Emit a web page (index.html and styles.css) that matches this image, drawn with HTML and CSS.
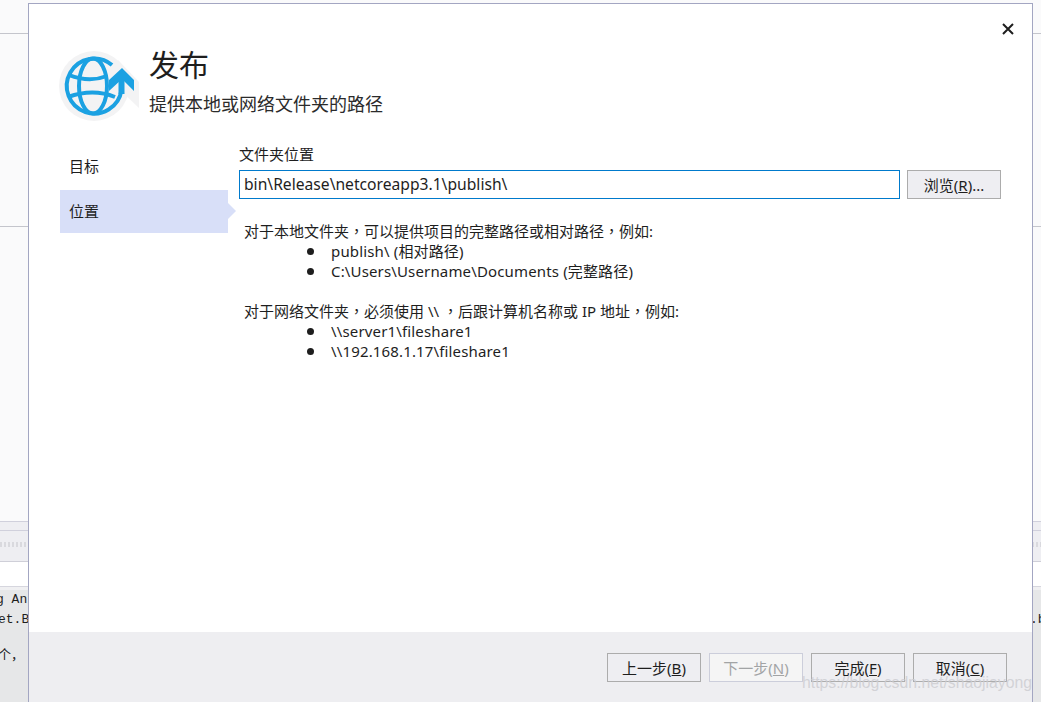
FILE: index.html
```html
<!DOCTYPE html>
<html lang="zh-CN">
<head>
<meta charset="utf-8">
<title>发布</title>
<link rel="stylesheet" href="styles.css">
</head>
<body>
<div class="ide">
  <div class="ide-top"><div class="ide-row-a"></div><div class="ide-row-b"></div><div class="ide-row-c"></div></div>
  <div class="ide-tabs"><div class="ide-grip"></div></div>
  <div class="ide-blank"></div>
  <div class="ide-console">
    <div class="con-line con-a"><span>g Ant</span></div>
    <div class="con-line con-b"><span>et.B</span><span class="con-right">.b</span></div>
    <div class="con-line con-c"><span>个，</span></div>
  </div>
</div>
<section class="dialog">
  <button class="close" aria-label="关闭">
    <svg width="12" height="12" viewBox="0 0 12 12"><path d="M1 1l10 10M11 1L1 11" stroke="#1e1e1e" stroke-width="2" fill="none"/></svg>
  </button>
  <header class="head">
    <svg class="logo" width="82" height="74" viewBox="59 49 82 74">
      <circle cx="94" cy="86" r="35" fill="#f3f3f4"/>
      <path d="M118 60l21 22v26l-24-23z" fill="#f3f3f4"/>
      <g fill="none" stroke="#1ba1e2" stroke-width="4">
        <path d="M112 65A27.500 27.500 0 1 0 121.500 90"/>
        <ellipse cx="93" cy="86" rx="14" ry="27.500"/>
        <path d="M69 75q20 8 38 1M68 97q25-9 47 0"/>
      </g>
      <path d="M121.500 76V94" fill="none" stroke="#1ba1e2" stroke-width="6"/>
      <path d="M122 68l12 12v11l-12-12-13 12V80z" fill="#1ba1e2"/>
    </svg>
    <div class="titles">
      <h1>发布</h1>
      <p>提供本地或网络文件夹的路径</p>
    </div>
  </header>
  <div class="body">
    <nav class="steps">
      <div class="step">目标</div>
      <div class="step active">位置</div>
    </nav>
    <main class="content">
      <label class="field-label">文件夹位置</label>
      <div class="field-row">
        <div class="input">bin\Release\netcoreapp3.1\publish\</div>
        <button class="btn btn-browse">浏览(<u>R</u>)...</button>
      </div>
      <div class="help">
        <p>对于本地文件夹<span class="cm" lang="zh-TW">，</span>可以提供项目的完整路径或相对路径<span class="cm" lang="zh-TW">，</span>例如:</p>
        <ul>
          <li>publish\ (相对路径)</li>
          <li>C:\Users\Username\Documents (完整路径)</li>
        </ul>
        <p class="gap">对于网络文件夹<span class="cm" lang="zh-TW">，</span>必须使用 \\ <span class="cm" lang="zh-TW">，</span>后跟计算机名称或 IP 地址<span class="cm" lang="zh-TW">，</span>例如:</p>
        <ul>
          <li>\\server1\fileshare1</li>
          <li>\\192.168.1.17\fileshare1</li>
        </ul>
      </div>
    </main>
  </div>
  <footer class="foot">
    <button class="btn">上一步(<u>B</u>)</button>
    <button class="btn" disabled>下一步(<u>N</u>)</button>
    <button class="btn">完成(<u>F</u>)</button>
    <button class="btn">取消(<u>C</u>)</button>
  </footer>
</section>
<div class="watermark">https://blog.csdn.net/shaojiayong</div>
</body>
</html>
```
FILE: styles.css
```css
* { box-sizing: border-box; }
html, body { margin: 0; height: 702px; overflow: hidden; }
body { font-family: "Noto Sans", "Noto Sans CJK SC", sans-serif; color: #1e1e1e; background: #fafafb; position: relative; }

.ide { display: flex; flex-direction: column; height: 702px; }
.ide-top { height: 521px; display: flex; flex-direction: column; }
.ide-row-a { height: 34px; border-bottom: 1px solid #c4c5cc; }
.ide-row-b { height: 193px; border-bottom: 1px solid #c4c5cc; }
.ide-row-c { flex: 1; }
.ide-tabs { height: 41px; background: #eeeef2; border-top: 1px solid #d0d0dc; border-bottom: 1px solid #cfcfd8; padding-top: 20px; position: relative; }
.ide-tabs::before { content: ""; position: absolute; left: 0; right: 0; top: 8px; border-top: 1px solid #d0d0dc; }
.ide-grip { height: 5px; background: repeating-linear-gradient(90deg, #d9d9de 0 2px, #eeeef2 2px 4px); }
.ide-blank { height: 25px; background: #fff; border-bottom: 1px solid #d6d6de; }
.ide-console { flex: 1; background: #e6e7e8; border-top: 3px solid #f0f0f2; font-family: "Liberation Mono", monospace; font-size: 13px; line-height: 20px; color: #1e1e1e; }
.con-line { position: relative; height: 20px; white-space: nowrap; }
.con-a span { margin-left: -4px; }
.con-b span:first-child { margin-left: -2px; }
.con-c { margin-top: 14px; }
.con-c span { margin-left: -2px; font-family: "Noto Sans CJK SC", sans-serif; }
.con-right { position: absolute; left: 1030px; top: 0; }

.dialog { position: absolute; left: 28px; top: 3px; width: 1005px; height: 699px; background: #fff; border: 1px solid #a3a6c2; border-bottom: 0; display: flex; flex-direction: column; }
.close { position: absolute; right: 18px; top: 19px; width: 12px; height: 12px; padding: 0; border: 0; background: none; display: flex; }

.head { display: flex; height: 143px; padding: 45px 0 0 30px; flex: none; }
.logo { flex: none; }
.titles { margin-left: 8px; }
.titles h1 { margin: -6px 0 0; font-size: 30px; font-weight: 400; line-height: 40px; font-family: "Noto Sans CJK SC", sans-serif; }
.titles p { margin: 9px 0 0; font-size: 18px; line-height: 22px; color: #2b2b2b; font-family: "Noto Sans CJK SC", sans-serif; }

.body { display: flex; flex: 1; min-height: 0; }
.steps { width: 168px; margin-left: 31px; flex: none; font-family: "Noto Sans CJK SC", sans-serif; }
.step { height: 43px; line-height: 37px; padding-left: 9px; font-size: 15px; }
.step.active { background: #d8dff8; position: relative; line-height: 41px; }
.step.active::after { content: ""; position: absolute; left: 168px; top: 13px; border: 8px solid transparent; border-left-color: #d8dff8; border-right: 0; }
.content { flex: 1; margin-left: 11px; padding-right: 31px; }
.field-label { display: block; font-size: 15px; line-height: 20px; margin-top: -3px; font-family: "Noto Sans CJK SC", sans-serif; }
.field-row { display: flex; gap: 7px; margin-top: 6px; }
.input { width: 661px; height: 29px; border: 1px solid #007acc; padding-left: 4px; font-size: 15.650px; line-height: 27px; white-space: nowrap; }
.btn { height: 29px; border: 1px solid #acacac; background: #eeeef2; color: #1e1e1e; font: 15px/1 "Noto Sans", "Noto Sans CJK SC", sans-serif; padding: 2px 0 0; }
.btn-browse { width: 94px; }
.btn:disabled { color: #a2a4a5; border-color: #cccedb; background: #f5f5f5; }

.help { margin: 22px 0 0 5px; font-size: 15px; line-height: 20px; }
.help p { margin: 0; }
.help .cm { font-family: "Noto Sans CJK TC", sans-serif; }
.help .gap { margin-top: 20px; }
.help ul { margin: 0; padding: 0 0 0 87px; list-style: none; }
.help li { position: relative; letter-spacing: .15px; }
.help li::before { content: ""; position: absolute; left: -24px; top: 7px; width: 7px; height: 7px; border-radius: 50%; background: #1e1e1e; }

.foot { flex: none; height: 70px; background: #eeeef1; display: flex; justify-content: flex-end; gap: 8px; padding: 21px 25px 0 0; }
.foot .btn { width: 94px; }
.watermark { position: absolute; left: 802px; top: 673px; font: 15.800px/20px "Liberation Sans", sans-serif; color: rgba(205, 205, 210, .85); white-space: nowrap; }
```
